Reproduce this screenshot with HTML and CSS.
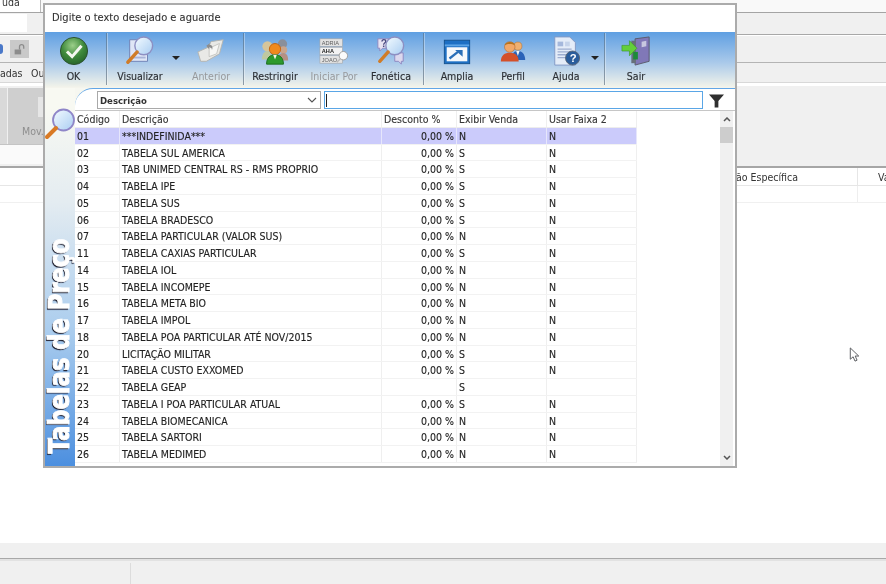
FILE: index.html
```html
<!DOCTYPE html>
<html lang="pt-BR">
<head>
<meta charset="utf-8">
<title>Tabelas de Preço</title>
<link rel="stylesheet" href="styles.css">
</head>
<body>
<div class="app">
  <div class="band band-tabs"><div class="app-tab">uda</div></div>
  <div class="band band-input"><div class="app-input"></div></div>
  <div class="band band-tools">
    <span class="round-btn"></span>
    <span class="lock-btn">
      <svg viewBox="0 0 16 16" width="13" height="13"><path d="M2 8h8v6H2z" fill="#8c8c8c"/><path d="M8 8V4.5a2.6 2.6 0 0 1 5.2 0V7" fill="none" stroke="#8c8c8c" stroke-width="1.6"/></svg>
    </span>
  </div>
  <div class="band band-nav"><span class="nav-a">adas</span><span class="nav-b">Ou</span></div>
  <div class="band band-gap"></div>
  <div class="band band-panel">
    <div class="panel-left">
      <div class="panel-btn-a"></div>
      <div class="panel-btn-b"><span class="panel-glyph"></span><span class="panel-label">Mov.</span></div>
    </div>
    <div class="panel-under"></div>
  </div>
  <div class="band band-head"><span class="head-a">ão Específica</span><span class="head-b">Va</span></div>
  <div class="band band-row"><span class="row-div"></span></div>
  <div class="band-body"></div>
  <div class="band band-foot-a"></div>
  <div class="band band-foot-b"><span class="foot-div"></span></div>
</div>

<svg class="cursor" viewBox="0 0 12 17" width="12" height="16"><path d="M1 1v12l3-2.6 2 4.6 2.2-1-2-4.4H10z" fill="#fff" stroke="#55585c" stroke-width="1"/></svg>

<section class="dialog">
  <header class="title">Digite o texto desejado e aguarde</header>

  <nav class="toolbar">
    <div class="tool">
      <svg viewBox="0 0 32 32" width="30" height="30"><defs><radialGradient id="ok" cx=".45" cy=".3" r=".8"><stop offset="0" stop-color="#9ccf8a"/><stop offset=".5" stop-color="#3f8a3c"/><stop offset="1" stop-color="#1f5a25"/></radialGradient></defs><circle cx="16" cy="16" r="14.5" fill="url(#ok)" stroke="#2b4f2e"/><path d="M8.5 16.5l5.5 5.5L24 10.5" fill="none" stroke="#f4f8f0" stroke-width="3.2"/></svg>
      <span>OK</span>
    </div>
    <i class="sep"></i>
    <div class="tool">
      <svg viewBox="0 0 32 32" width="32" height="30"><defs><linearGradient id="lens" x1="0" y1="0" x2="1" y2="1"><stop offset="0" stop-color="#f4fbff"/><stop offset="1" stop-color="#a9cdf2"/></linearGradient></defs><path d="M5 4h19v23H5z" fill="#dfe6f6" stroke="#6d7fb3"/><path d="M8 22h14v2H8z" fill="#a8b4d8"/><circle cx="20" cy="10.500" r="9.500" fill="url(#lens)" stroke="#8d8fc2" stroke-width="1.500"/><path d="M13 17l-10 11" stroke="#d07c28" stroke-width="3.600" stroke-linecap="round"/></svg>
      <span>Visualizar</span>
    </div>
    <i class="caret"></i>
    <div class="tool off">
      <svg viewBox="0 0 32 32" width="30" height="30"><path d="M2 17l11-5 3-6 13-2-4 15-14 8H5z" fill="#e9e9e6" stroke="#b5b5b0"/><path d="M14 13l11-5-3 11-8 3z" fill="#f7f7f5" stroke="#c4c4c0"/><path d="M16 7l-5 3.500 3 3.500v-2c2 0 3 1 3 3 1.500-3 0-6-3-6z" fill="#8d8d8d"/></svg>
      <span>Anterior</span>
    </div>
    <i class="sep"></i>
    <div class="tool">
      <svg viewBox="0 0 32 32" width="30" height="30"><circle cx="8" cy="11" r="5.5" fill="#d7c59a"/><path d="M2 25c0-6 3-9 6-9s4 3 4 9z" fill="#bfc8a0"/><circle cx="24" cy="8.5" r="5" fill="#8a8f9a"/><circle cx="25" cy="15" r="4" fill="#c9a58c"/><path d="M19 26c0-5 2-8 6-8s5 4 5 8z" fill="#b59083"/><circle cx="16" cy="14" r="6" fill="#f08a1e" stroke="#c46410"/><path d="M7 30c0-7 4-10 9-10s9 3 9 10z" fill="#2d9a2d" stroke="#1c6d1c"/><path d="M14 20h4l-2 5z" fill="#f5f5e8"/></svg>
      <span>Restringir</span>
    </div>
    <div class="tool off">
      <svg viewBox="0 0 32 32" width="32" height="30"><rect x="1" y="3" width="24" height="8" fill="#e2e2e2" stroke="#a3a3a3" stroke-width=".6"/><rect x="1" y="12" width="24" height="8" fill="#f3f3f3" stroke="#a3a3a3" stroke-width=".6"/><rect x="1" y="21" width="24" height="8" fill="#e2e2e2" stroke="#a3a3a3" stroke-width=".6"/><text x="3" y="9.500" class="mini">ADRIA</text><text x="3" y="18.500" class="mini mini-b">AHA</text><text x="3" y="27.500" class="mini">JOAO</text><circle cx="26" cy="21" r="4.5" fill="#fbfbfb" stroke="#9c9c9c"/><path d="M23 24l-4 4" stroke="#b9b9b9" stroke-width="1.6"/></svg>
      <span>Iniciar Por</span>
    </div>
    <div class="tool">
      <svg viewBox="0 0 32 32" width="32" height="30"><path d="M2 3h12v10H7l-3 3v-3H2z" fill="#e8e3f2" stroke="#8e88c0"/><text x="5" y="12" class="q">?</text><path d="M20 18h9v9h-2v3l-3-3h-4z" fill="#dcd8ee" stroke="#8e88c0"/><circle cx="20" cy="10.500" r="9.500" fill="url(#lens)" stroke="#8d8fc2" stroke-width="1.500"/><path d="M13 17l-9 10" stroke="#d07c28" stroke-width="3.600" stroke-linecap="round"/></svg>
      <span>Fonética</span>
    </div>
    <i class="sep"></i>
    <div class="tool">
      <svg viewBox="0 0 32 32" width="30" height="30"><rect x="2.500" y="4.500" width="27" height="25" fill="#1d6fc4" stroke="#14528f"/><rect x="3" y="9" width="26" height="2" fill="#5ca4e6"/><rect x="5" y="12" width="22" height="15" fill="#f5f8fc"/><path d="M8 24l9-7" stroke="#2a6fb8" stroke-width="2.400"/><path d="M14 15h8v7z" fill="#2a6fb8"/></svg>
      <span>Amplia</span>
    </div>
    <div class="tool">
      <svg class="ic-small" viewBox="0 0 32 32" width="26" height="26"><circle cx="22" cy="10" r="5" fill="#f0b070" stroke="#a66a30" stroke-width=".6"/><path d="M14 27c0-7 3-11 8-11s9 4 9 11z" fill="#2a62b8"/><path d="M20 16h4l-2 6z" fill="#f5f5f5"/><circle cx="12" cy="11" r="6.5" fill="#f3a868" stroke="#a85c24" stroke-width=".6"/><path d="M6 9c0-5 12-6 12 0-3-2-9-2-12 0z" fill="#b8741e"/><path d="M1 29c0-8 5-11 11-11s11 3 11 11z" fill="#d4502a"/></svg>
      <span>Perfil</span>
    </div>
    <div class="tool">
      <svg viewBox="0 0 32 32" width="30" height="32"><path d="M4 1h16l6 6v24H4z" fill="#e4ecf8" stroke="#8299c4"/><path d="M7 6h6v5H7z" fill="#a5b8dc"/><path d="M15 6h5v5h-5z" fill="#c5d3ea"/><path d="M7 14h15M7 17h15M7 20h10M7 23h9" stroke="#9eaed0" stroke-width="1.4"/><circle cx="23" cy="23.5" r="7.5" fill="#2a5d9c" stroke="#5a6878"/><text x="20" y="28" class="q q-w">?</text></svg>
      <span>Ajuda</span>
    </div>
    <i class="caret"></i>
    <i class="sep"></i>
    <div class="tool">
      <svg viewBox="0 0 32 32" width="30" height="30"><path d="M15 3l15-2v26l-15 4z" fill="#8078b8" stroke="#5a5a6a"/><path d="M11 5h5v24h-5z" fill="#67707a"/><path d="M22 6l5-1v6l-5 1z" fill="#c8c8e0"/><rect x="13" y="17" width="5" height="8" fill="#1d8a3a"/><path d="M1 10h8V5l8 8-8 8v-5H1z" fill="#63cf3a" stroke="#3e9a28" stroke-width=".7"/></svg>
      <span>Sair</span>
    </div>
  </nav>

  <div class="content">
    <aside class="side">
      <svg class="side-lens" viewBox="0 0 32 32" width="32" height="32"><circle cx="19.500" cy="12" r="10.500" fill="url(#lens)" stroke="#8f86c8" stroke-width="1.800"/><path d="M12 20L3 29" stroke="#d97a24" stroke-width="4" stroke-linecap="round"/></svg>
      <h1 class="side-title">Tabelas de Preço</h1>
    </aside>

    <div class="main">
      <div class="filter">
        <div class="combo"><span>Descrição</span><svg viewBox="0 0 10 6" width="10" height="6"><path d="M1 1l4 4 4-4" fill="none" stroke="#555" stroke-width="1.100"/></svg></div>
        <div class="search"><i class="text-caret"></i></div>
        <svg class="funnel" viewBox="0 0 16 14" width="15" height="14"><path d="M0 0h16L10 7v7H6V7z" fill="#2f2f2f"/></svg>
      </div>

      <div class="grid-wrap">
        <div class="grid">
          <div class="row row-head"><span>Código</span><span>Descrição</span><span>Desconto %</span><span>Exibir Venda</span><span>Usar Faixa 2</span></div>
          <div class="row row-sel"><span>01</span><span>***INDEFINIDA***</span><span class="num">0,00 %</span><span>N</span><span>N</span></div>
          <div class="row"><span>02</span><span>TABELA SUL AMERICA</span><span class="num">0,00 %</span><span>S</span><span>N</span></div>
          <div class="row"><span>03</span><span>TAB UNIMED CENTRAL RS - RMS PROPRIO</span><span class="num">0,00 %</span><span>S</span><span>N</span></div>
          <div class="row"><span>04</span><span>TABELA IPE</span><span class="num">0,00 %</span><span>S</span><span>N</span></div>
          <div class="row"><span>05</span><span>TABELA SUS</span><span class="num">0,00 %</span><span>S</span><span>N</span></div>
          <div class="row"><span>06</span><span>TABELA BRADESCO</span><span class="num">0,00 %</span><span>S</span><span>N</span></div>
          <div class="row"><span>07</span><span>TABELA PARTICULAR (VALOR SUS)</span><span class="num">0,00 %</span><span>N</span><span>N</span></div>
          <div class="row"><span>11</span><span>TABELA CAXIAS PARTICULAR</span><span class="num">0,00 %</span><span>S</span><span>N</span></div>
          <div class="row"><span>14</span><span>TABELA IOL</span><span class="num">0,00 %</span><span>N</span><span>N</span></div>
          <div class="row"><span>15</span><span>TABELA INCOMEPE</span><span class="num">0,00 %</span><span>N</span><span>N</span></div>
          <div class="row"><span>16</span><span>TABELA META BIO</span><span class="num">0,00 %</span><span>N</span><span>N</span></div>
          <div class="row"><span>17</span><span>TABELA IMPOL</span><span class="num">0,00 %</span><span>N</span><span>N</span></div>
          <div class="row"><span>18</span><span>TABELA POA PARTICULAR ATÉ NOV/2015</span><span class="num">0,00 %</span><span>N</span><span>N</span></div>
          <div class="row"><span>20</span><span>LICITAÇÃO MILITAR</span><span class="num">0,00 %</span><span>S</span><span>N</span></div>
          <div class="row"><span>21</span><span>TABELA CUSTO EXXOMED</span><span class="num">0,00 %</span><span>S</span><span>N</span></div>
          <div class="row"><span>22</span><span>TABELA GEAP</span><span class="num"></span><span>S</span><span></span></div>
          <div class="row"><span>23</span><span>TABELA I POA PARTICULAR ATUAL</span><span class="num">0,00 %</span><span>S</span><span>N</span></div>
          <div class="row"><span>24</span><span>TABELA BIOMECANICA</span><span class="num">0,00 %</span><span>N</span><span>N</span></div>
          <div class="row"><span>25</span><span>TABELA SARTORI</span><span class="num">0,00 %</span><span>N</span><span>N</span></div>
          <div class="row"><span>26</span><span>TABELA MEDIMED</span><span class="num">0,00 %</span><span>N</span><span>N</span></div>
        </div>
        <div class="scroll">
          <svg class="chev" viewBox="0 0 8 5" width="8" height="5"><path d="M1 4l3-3 3 3" fill="none" stroke="#555" stroke-width="1.500"/></svg>
          <div class="thumb"></div>
          <svg class="chev chev-down" viewBox="0 0 8 5" width="8" height="5"><path d="M1 1l3 3 3-3" fill="none" stroke="#555" stroke-width="1.500"/></svg>
        </div>
      </div>
    </div>
  </div>
</section>
</body>
</html>
```
FILE: styles.css
```css
* { box-sizing: border-box; }
html, body { margin: 0; height: 100%; background: #fff; overflow: hidden; }
body { font-family: "DejaVu Sans Condensed", "DejaVu Sans", sans-serif; font-stretch: condensed; font-size: 10.5px; color: #222; filter: blur(.35px); }

/* background application */
.app { height: 584px; display: flex; flex-direction: column; color: #555; }
.band { flex: none; background: #f0f0f0; position: relative; display: flex; }
.band-tabs { height: 13px; background: #f9f9f9; border-bottom: 1px solid #a4a4a4; }
.app-tab { width: 41px; height: 12px; background: #fff; border-right: 1px solid #bbb; padding-left: 2px; line-height: 5px; color: #333; overflow: hidden; }
.band-input { height: 22px; border-bottom: 1px solid #a8a8a8; padding-top: 1px; }
.app-input { width: 27px; height: 18px; background: #fff; }
.band-tools { height: 28px; border-bottom: 1px solid #b4b4b4; align-items: center; gap: 7px; border-top: 1px solid #fff; }
.round-btn { width: 3px; height: 10px; background: #4a78c8; border-radius: 0 5px 5px 0; }
.lock-btn { width: 19px; height: 18px; background: #c9c9c9; display: flex; align-items: center; justify-content: center; }
.band-nav { height: 20px; align-items: center; border-bottom: 1px solid #d8d8d8; color: #333; }
.nav-a { margin-left: 0; width: 31px; }
.band-gap { height: 3px; background: #fff; }
.band-panel { height: 82px; border-bottom: 2px solid #a6a6a6; }
.panel-left { width: 44px; height: 56px; margin-top: 2px; display: flex; gap: 1px; }
.panel-btn-a { width: 7px; background: #d9d9d9; }
.panel-btn-b { flex: 1; background: #cfcfcf; position: relative; color: #8e8e8e; }
.panel-glyph { position: absolute; top: 9px; left: 30px; width: 6px; height: 20px; background: #e6e6e6; }
.panel-label { position: absolute; left: 14px; top: 37px; }
.panel-under { position: absolute; left: 0; top: 58px; width: 44px; height: 20px; background: #fafafa; border-top: 1px solid #c4c4c4; }
.band-head { height: 18px; background: #fff; border-bottom: 1px solid #e6e6e6; color: #333; line-height: 18px; }
.head-a { position: absolute; left: 736px; }
.head-b { position: absolute; left: 878px; }
.band-head::before { content: ""; position: absolute; left: 857px; top: 0; bottom: 0; width: 1px; background: #e6e6e6; }
.band-row { height: 17px; background: #fff; border-bottom: 1px solid #f0f0f0; }
.row-div { position: absolute; left: 857px; top: 0; bottom: 0; width: 1px; background: #eee; }
.band-body { flex: 1; background: #fff; }
.band-foot-a { height: 16px; background: #f0f0f0; border-bottom: 1px solid #a8a8a8; }
.band-foot-b { height: 25px; background: #f0f0f0; border-top: 2px solid #e2e2e2; }
.foot-div { position: absolute; left: 130px; top: 2px; bottom: 0; width: 1px; background: #dcdcdc; }

.cursor { position: absolute; left: 849px; top: 347px; }

/* dialog */
.dialog {
  position: absolute; left: 43px; top: 3px; width: 694px; height: 465px;
  background: #fff; border: 2px solid #ababab; display: flex; flex-direction: column;
}
.title { height: 27px; flex: none; padding-left: 7px; line-height: 26px; font-size: 11px; color: #333; background: #fff; -webkit-text-stroke: .1px #333; }

.toolbar {
  height: 56px; flex: none;
  display: grid;
  grid-template-columns: 57px 9px 58px 14px 56px 9px 54px 64px 50px 15px 52px 60px 46px 12px 7px 56px 1fr;
  background: linear-gradient(#5f9fe2, #a9c9ea 55%, #f2f3ea);
  border-bottom: 1px solid #f4f4ec;
}
.tool { display: flex; flex-direction: column; align-items: center; padding-top: 4px; height: 55px; }
.tool svg { flex: none; height: 30px; overflow: visible; }
.tool .ic-small { height: 26px; margin: 2px 0; }
.tool span { margin-top: 3px; color: #2c3036; white-space: nowrap; line-height: 14px; -webkit-text-stroke: .15px #2c3036; }
.tool.off span { color: #97999c; -webkit-text-stroke: 0; }
.sep { justify-self: center; width: 1px; height: 52px; margin-top: 1px; background: linear-gradient(#5d84aa, #8f9ba5); box-shadow: 1px 0 0 rgba(255,255,255,.35); }
.caret { justify-self: center; align-self: start; margin-top: 24px; width: 0; height: 0; border: 4px solid transparent; border-top-color: #222; border-bottom: 0; }
.mini { font: 6px "Liberation Sans", sans-serif; fill: #606060; }
.mini-b { font-weight: 700; fill: #222; }
.q { font: 700 11px "Liberation Sans", sans-serif; fill: #4a4a80; }
.q-w { font-size: 12px; fill: #fff; }

.content { flex: 1; display: flex; min-height: 0; background: #f6f7f0; }
.side {
  width: 30px; flex: none; position: relative;
  background: linear-gradient(#f8f9f2 5%, #e4ecf1 30%, #a9ccee 65%, #4c8fdf);
}
.side-lens { position: absolute; left: -1px; top: 20px; }
.side-title {
  position: absolute; left: 0; bottom: -18px; margin: 0;
  writing-mode: vertical-rl; transform: rotate(180deg) scaleY(.78);
  font: 700 29px/28px "DejaVu Sans", sans-serif; font-stretch: normal; color: #fff; white-space: nowrap;
  -webkit-text-stroke: 1px #fff;
  text-shadow: -1.200px -1px 0 #1d1d28, -1.800px -1.500px 1px #39405a;
}
.main { flex: 1; display: flex; flex-direction: column; min-width: 0; background: #fff; border-top: 1px solid #62a6e6; border-top-left-radius: 18px; overflow: hidden; }
.filter { height: 21px; flex: none; display: flex; align-items: flex-start; padding: 2px 0 0 22px; }
.combo { width: 224px; height: 18px; border: 1px solid #a9a9a9; display: flex; align-items: center; justify-content: space-between; padding: 0 3px 0 2px; font-weight: 700; font-size: 9.5px; color: #333; }
.search { width: 379px; height: 18px; margin-left: 3px; border: 1px solid #5aa6e6; display: flex; align-items: center; padding-left: 1px; }
.text-caret { width: 1px; height: 13px; background: #222; }
.funnel { margin: 3px 0 0 6px; flex: none; }
.grid-wrap { flex: 1; min-height: 0; display: flex; border-top: 1px solid #c6c6c6; }
.grid { width: 645px; flex: none; }
.row { display: grid; grid-template-columns: 45px 262px 75px 90px 90px; width: 562px; height: 16.76px; line-height: 17px; border-bottom: 1px solid #f2f2f2; -webkit-text-stroke: .12px #222; }
.row span { border-right: 1px solid #efefef; padding-left: 2px; white-space: nowrap; overflow: hidden; }
.row-head { height: 16.9px; color: #3c3c3c; background: #fff; border-bottom-color: #ededed; }
.row-sel { background: #cbcbfb; }
.row-sel span { border-right-color: #e6e6fb; }
.row .num { text-align: right; padding: 0 2px 0 0; }
.scroll { width: 13px; margin-left: 0; flex: none; background: #f0f0f0; position: relative; }
.chev { position: absolute; left: 3px; top: 6px; }
.chev-down { top: auto; bottom: 6px; }
.thumb { position: absolute; left: 0; right: 0; top: 16px; height: 16px; background: #cdcdcd; }
```
